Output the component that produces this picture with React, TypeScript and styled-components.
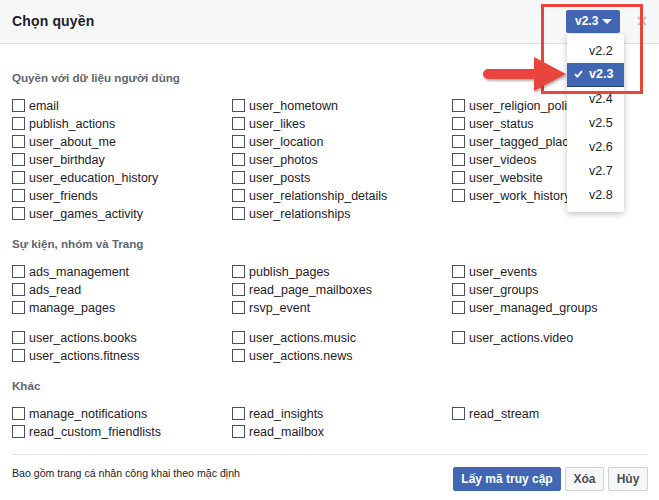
import React from "react";
import styled, { createGlobalStyle } from "styled-components";

const Global = createGlobalStyle`
  html, body { margin: 0; padding: 0; background: #fff; }
  body { font-family: "Liberation Sans", Arial, sans-serif; color: #1d2129; }
  * { box-sizing: border-box; }
`;

const Dialog = styled.div`
  position: relative;
  width: 659px;
  height: 500px;
  background: #fff;
  overflow: hidden;
`;

const Header = styled.div`
  height: 44px;
  background: #f6f7f9;
  border-bottom: 1px solid #dddfe2;
  display: flex;
  align-items: center;
  padding: 0 12px 2px 12px;
`;

const Title = styled.h1`
  margin: 0;
  flex: 1;
  font-size: 14px;
  font-weight: bold;
  color: #1d2129;
  line-height: 18px;
  letter-spacing: 0.15px;
`;

const VersionWrap = styled.div`
  position: relative;
  margin-right: 17px;
  margin-top: 1px;
`;

const VersionButton = styled.div`
  width: 54px;
  height: 23px;
  background: #4267b2;
  border-radius: 2px;
  color: #fff;
  font-size: 12px;
  font-weight: bold;
  display: flex;
  align-items: center;
  padding-left: 9px;
  gap: 4px;
`;

const Caret = styled.span`
  width: 0;
  height: 0;
  border-left: 5px solid transparent;
  border-right: 5px solid transparent;
  border-top: 5px solid #fff;
`;

const Menu = styled.div`
  position: absolute;
  left: 1px;
  top: 24px;
  width: 57px;
  padding: 5px 0;
  background: #fff;
  border-radius: 3px;
  box-shadow: 0 2px 6px rgba(0, 0, 0, 0.25);
  z-index: 5;
`;

const MenuItem = styled.div<{ $active?: boolean }>`
  height: 24px;
  display: flex;
  align-items: center;
  padding-left: 7px;
  font-size: 12.5px;
  color: ${(p) => (p.$active ? "#fff" : "#1d2129")};
  background: ${(p) => (p.$active ? "#4267b2" : "transparent")};
  border-bottom: ${(p) => (p.$active ? "1px solid #29487d" : "none")};
  font-weight: ${(p) => (p.$active ? "bold" : "normal")};
`;

const CheckSlot = styled.span`
  width: 15px;
  display: inline-flex;
  align-items: center;
`;

const Close = styled.div`
  width: 10px;
  height: 10px;
  display: flex;
`;

const Body = styled.div`
  padding: 26px 11px 0 12px;
`;

const Section = styled.section`
  & + & {
    margin-top: 13px;
  }
`;

const SectionTitle = styled.h2`
  margin: 0 0 11px 0;
  font-size: 11.6px;
  line-height: 16px;
  font-weight: bold;
  color: #606770;
`;

const Group = styled.div`
  display: grid;
  grid-template-columns: 220px 220px 1fr;
  & + & {
    margin-top: 12px;
  }
`;

const Column = styled.div`
  display: flex;
  flex-direction: column;
`;

const Option = styled.label`
  height: 18px;
  display: flex;
  align-items: center;
  font-size: 12.5px;
  color: #1d2129;
  white-space: nowrap;
`;

const Box = styled.span`
  width: 13px;
  height: 13px;
  border: 1px solid #4b4f56;
  background: #fff;
  margin-right: 4px;
  margin-top: -2px;
  flex: none;
`;

const Separator = styled.hr`
  margin: 13px 0 0 0;
  border: none;
  border-top: 1px solid #dddfe2;
`;

const Footer = styled.div`
  display: flex;
  align-items: flex-start;
  padding-top: 12px;
`;

const FooterNote = styled.div`
  flex: 1;
  font-size: 10.6px;
  line-height: 13px;
  color: #1d2129;
`;

const Buttons = styled.div`
  display: flex;
  gap: 4px;
`;

const Button = styled.button<{ $primary?: boolean; $w: number }>`
  width: ${(p) => p.$w}px;
  height: 24px;
  padding: 0;
  font-family: "Liberation Sans", Arial, sans-serif;
  font-size: 12px;
  font-weight: bold;
  border-radius: 2px;
  border: 1px solid ${(p) => (p.$primary ? "#4267b2" : "#ced0d4")};
  background: ${(p) => (p.$primary ? "#4267b2" : "#f6f7f9")};
  color: ${(p) => (p.$primary ? "#fff" : "#4b4f56")};
`;

const Highlight = styled.div`
  position: absolute;
  left: 541px;
  top: 4px;
  width: 102px;
  height: 90px;
  border: 3px solid #e8453c;
  z-index: 10;
  pointer-events: none;
`;

const Arrow = styled.svg`
  position: absolute;
  left: 480px;
  top: 50px;
  z-index: 10;
  filter: drop-shadow(1px 2px 1px rgba(0, 0, 0, 0.3));
`;

type Cols = string[][];

const sections: { title: string; groups: Cols[] }[] = [
  {
    title: "Quyền với dữ liệu người dùng",
    groups: [
      [
        [
          "email",
          "publish_actions",
          "user_about_me",
          "user_birthday",
          "user_education_history",
          "user_friends",
          "user_games_activity",
        ],
        [
          "user_hometown",
          "user_likes",
          "user_location",
          "user_photos",
          "user_posts",
          "user_relationship_details",
          "user_relationships",
        ],
        [
          "user_religion_politics",
          "user_status",
          "user_tagged_places",
          "user_videos",
          "user_website",
          "user_work_history",
        ],
      ],
    ],
  },
  {
    title: "Sự kiện, nhóm và Trang",
    groups: [
      [
        ["ads_management", "ads_read", "manage_pages"],
        ["publish_pages", "read_page_mailboxes", "rsvp_event"],
        ["user_events", "user_groups", "user_managed_groups"],
      ],
      [
        ["user_actions.books", "user_actions.fitness"],
        ["user_actions.music", "user_actions.news"],
        ["user_actions.video"],
      ],
    ],
  },
  {
    title: "Khác",
    groups: [
      [
        ["manage_notifications", "read_custom_friendlists"],
        ["read_insights", "read_mailbox"],
        ["read_stream"],
      ],
    ],
  },
];

const versions = ["v2.2", "v2.3", "v2.4", "v2.5", "v2.6", "v2.7", "v2.8"];

export default function App() {
  return (
    <>
      <Global />
      <Dialog>
        <Header>
          <Title>Chọn quyền</Title>
          <VersionWrap>
            <VersionButton>
              v2.3 <Caret />
            </VersionButton>
            <Menu>
              {versions.map((v) => (
                <MenuItem key={v} $active={v === "v2.3"}>
                  <CheckSlot>
                    {v === "v2.3" && (
                      <svg width="9" height="8" viewBox="0 0 9 8">
                        <path d="M1 4.2 L3.4 6.6 L8 1.2" fill="none" stroke="#fff" strokeWidth="1.8" />
                      </svg>
                    )}
                  </CheckSlot>
                  {v}
                </MenuItem>
              ))}
            </Menu>
          </VersionWrap>
          <Close>
            <svg width="10" height="10" viewBox="0 0 10 10">
              <path d="M1 1 L9 9 M9 1 L1 9" stroke="#bec2c9" strokeWidth="2.2" />
            </svg>
          </Close>
        </Header>
        <Body>
          {sections.map((s) => (
            <Section key={s.title}>
              <SectionTitle>{s.title}</SectionTitle>
              {s.groups.map((g, gi) => (
                <Group key={gi}>
                  {g.map((col, ci) => (
                    <Column key={ci}>
                      {col.map((item) => (
                        <Option key={item}>
                          <Box />
                          {item}
                        </Option>
                      ))}
                    </Column>
                  ))}
                </Group>
              ))}
            </Section>
          ))}
          <Separator />
          <Footer>
            <FooterNote>Bao gồm trang cá nhân công khai theo mặc định</FooterNote>
            <Buttons>
              <Button $primary $w={108}>Lấy mã truy cập</Button>
              <Button $w={39}>Xóa</Button>
              <Button $w={40}>Hủy</Button>
            </Buttons>
          </Footer>
        </Body>
        <Highlight />
        <Arrow width="90" height="50" viewBox="0 0 90 50">
          <path d="M8 19 L54 19 L54 7 L86 24 L54 41 L54 29 L8 29 A5 5 0 0 1 8 19 Z" fill="#e8453c" />
        </Arrow>
      </Dialog>
    </>
  );
}
